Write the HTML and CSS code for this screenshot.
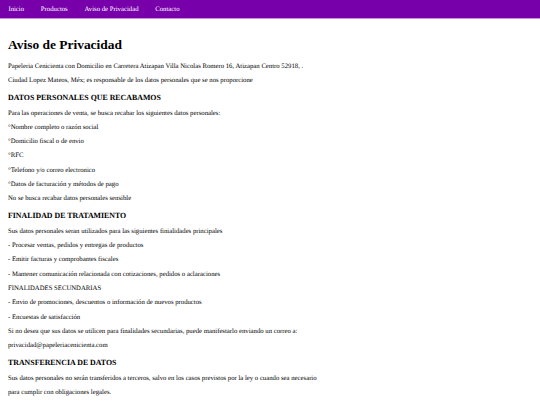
FILE: index.html
```html
<!DOCTYPE html>
<html lang="es">
<head>
<meta charset="utf-8">
<title>Aviso de Privacidad</title>
<link rel="stylesheet" href="styles.css">
</head>
<body>
<nav class="nav">
  <a href="#">Inicio</a>
  <a href="#">Productos</a>
  <a href="#">Aviso de Privacidad</a>
  <a href="#">Contacto</a>
</nav>
<main class="content">
  <h1 class="title">Aviso de Privacidad</h1>
  <p>Papeleria Cenicienta con Domicilio en Carretera Atizapan Villa Nicolas Romero 16, Atizapan Centro 52918, .</p>
  <p>Ciudad Lopez Mateos, Méx; es responsable de los datos personales que se nos proporcione</p>
  <h3 class="sec">DATOS PERSONALES QUE RECABAMOS</h3>
  <p>Para las operaciones de venta, se busca recabar los siguientes datos personales:</p>
  <p>°Nombre completo o razón social</p>
  <p>°Domicilio fiscal o de envio</p>
  <p>°RFC</p>
  <p>°Telefono y/o correo electronico</p>
  <p>°Datos de facturación y métodos de pago</p>
  <p>No se busca recabar datos personales sensible</p>
  <h3 class="sec">FINALIDAD DE TRATAMIENTO</h3>
  <p>Sus datos personales seran utilizados para las siguientes finialidades principales</p>
  <p>- Procesar ventas, pedidos y entregas de productos</p>
  <p>- Emitir facturas y comprobantes fiscales</p>
  <p>- Mantener comunicación relacionada con cotizaciones, pedidos o aclaraciones</p>
  <p>FINALIDADES SECUNDARIAS</p>
  <p>- Envio de promociones, descuentos o información de nuevos productos</p>
  <p>- Encuestas de satisfacción</p>
  <p>Si no desea que sus datos se utilicen para finalidades secundarias, puede manifestarlo enviando un correo a:</p>
  <p>privacidad@papeleriacenicienta.com</p>
  <h3 class="sec">TRANSFERENCIA DE DATOS</h3>
  <p>Sus datos personales no serán transferidos a terceros, salvo en los casos previstos por la ley o cuando sea necesario</p>
  <p>para cumplir con obligaciones legales.</p>
</main>
</body>
</html>
```
FILE: styles.css
```css
html, body {
  margin: 0;
  padding: 0;
  background: #ffffff;
}
body {
  font-family: "Liberation Serif", "Times New Roman", serif;
  font-size: 6.72px;
  color: #000000;
}
.nav {
  display: flex;
  align-items: center;
  height: 18px;
  background: #7700aa;
  border-bottom: 1px solid #d08ae0;
  text-rendering: geometricPrecision;
}
.nav a {
  color: #ffffff;
  text-decoration: none;
  padding: 0 8.4px;
}
.content {
  padding: 0 8px;
}
.title {
  font: bold 13.44px/15.5px "Liberation Serif", "Times New Roman", serif;
  margin: 18px 0 10.25px;
}
.content p {
  margin: 6.3px 0;
  line-height: 8px;
  text-rendering: geometricPrecision;
}
.sec {
  font-size: 7.86px;
  line-height: 9px;
  margin: 7.5px 0 8px;
  text-rendering: geometricPrecision;
}
```
